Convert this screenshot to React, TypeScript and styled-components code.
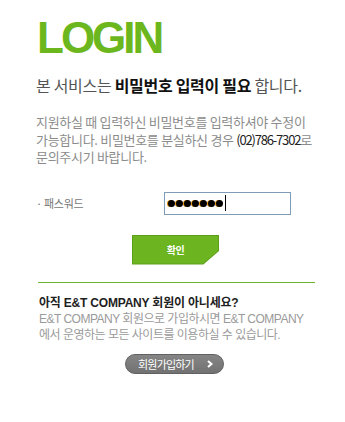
import * as React from 'react';
import styled, { createGlobalStyle } from 'styled-components';

const GlobalStyle = createGlobalStyle`
    html, body {
        margin: 0;
        padding: 0;
        background: #fff;
    }
    body {
        font-family: "Liberation Sans", "Noto Sans CJK KR", sans-serif;
    }
`;

const Page = styled.div`
    width: 345px;
    height: 422px;
    padding: 16px 30px 0 36px;
    box-sizing: border-box;
    display: flex;
    flex-direction: column;
`;

const Logo = styled.h1`
    margin: 0 0 0 1px;
    font-family: "Liberation Sans", sans-serif;
    font-weight: 700;
    font-size: 44px;
    line-height: 44px;
    letter-spacing: -3px;
    color: #6cb61e;
`;

const Title = styled.p`
    margin: 15px 0 0;
    font-family: "Noto Sans CJK KR", sans-serif;
    font-size: 16px;
    line-height: 20px;
    letter-spacing: -0.3px;
    color: #555;

    strong {
        color: #111;
        font-weight: 700;
    }
`;

const Notice = styled.p`
    margin: 18px 0 0;
    font-family: "Noto Sans CJK KR", sans-serif;
    font-size: 13px;
    line-height: 17.5px;
    letter-spacing: -0.3px;
    color: #8c8c8c;
`;

const Phone = styled.span`
    color: #222;
    letter-spacing: -1.2px;
`;

const FormRow = styled.div`
    margin-top: 26px;
    display: flex;
    align-items: center;
`;

const Label = styled.label`
    width: 128px;
    font-family: "Noto Sans CJK KR", sans-serif;
    font-size: 11px;
    letter-spacing: -0.3px;
    color: #777;
`;

const PasswordBox = styled.div`
    width: 127px;
    height: 23px;
    box-sizing: border-box;
    border: 1px solid #7f9db9;
    display: flex;
    align-items: center;
    padding-left: 3px;
    gap: 1px;
`;

const Dot = styled.span`
    width: 7px;
    height: 7px;
    border-radius: 50%;
    background: #000;
    box-shadow: -1px 0 0 #d98a00;
`;

const Caret = styled.span`
    width: 1px;
    height: 16px;
    background: #000;
    margin-left: 1px;
`;

const ConfirmButton = styled.button`
    margin: 20px 0 0 96px;
    width: 87px;
    height: 30px;
    border: none;
    padding: 0;
    background: #5c9f18;
    clip-path: polygon(0 0, 100% 0, 100% 55%, 82% 100%, 0 100%);
    display: flex;
    cursor: pointer;

    span {
        flex: 1;
        margin: 1px;
        background: #6cb520;
        clip-path: polygon(0 0, 100% 0, 100% 55%, 82% 100%, 0 100%);
        color: #fff;
        font-family: "Noto Sans CJK KR", sans-serif;
        font-weight: 700;
        font-size: 10px;
        display: flex;
        align-items: center;
        justify-content: center;
        letter-spacing: -0.5px;
    }
`;

const Divider = styled.div`
    margin: 17px 0 0 2px;
    width: 277px;
    height: 1px;
    flex: none;
    background: #6db52e;
`;

const AskTitle = styled.p`
    margin: 12px 0 0 3px;
    font-family: "Liberation Sans", "Noto Sans CJK KR", sans-serif;
    font-weight: 700;
    font-size: 12px;
    line-height: 16px;
    letter-spacing: -0.2px;
    color: #1e1e1e;
`;

const AskText = styled.p`
    margin: 0 0 0 3px;
    font-family: "Liberation Sans", "Noto Sans CJK KR", sans-serif;
    font-size: 12px;
    line-height: 16px;
    letter-spacing: -0.5px;
    color: #9a9a9a;
`;

const JoinButton = styled.button`
    margin: 11px 0 0 89px;
    width: 99px;
    height: 20px;
    border-radius: 10px;
    border: 1px solid #616161;
    background: linear-gradient(#858585, #727272);
    color: #fff;
    font-family: "Noto Sans CJK KR", sans-serif;
    font-size: 11px;
    letter-spacing: -0.8px;
    display: flex;
    align-items: center;
    justify-content: space-between;
    padding: 0 10px 0 12px;
    box-sizing: border-box;
    cursor: pointer;
`;

const Chevron = styled.svg`
    width: 6px;
    height: 8px;
`;

const App: React.FC = () => {
    return (
        <>
            <GlobalStyle />
            <Page>
                <Logo>LOGIN</Logo>
                <Title>
                    본 서비스는 <strong>비밀번호 입력이 필요</strong> 합니다.
                </Title>
                <Notice>
                    지원하실 때 입력하신 비밀번호를 입력하셔야 수정이
                    <br />
                    가능합니다. 비밀번호를 분실하신 경우 <Phone>(02)786-7302</Phone>로
                    <br />
                    문의주시기 바랍니다.
                </Notice>
                <FormRow>
                    <Label>· 패스워드</Label>
                    <PasswordBox>
                        {Array.from({ length: 7 }).map((_, i) => (
                            <Dot key={i} />
                        ))}
                        <Caret />
                    </PasswordBox>
                </FormRow>
                <ConfirmButton>
                    <span>확인</span>
                </ConfirmButton>
                <Divider />
                <AskTitle>아직 E&amp;T COMPANY 회원이 아니세요?</AskTitle>
                <AskText>
                    E&amp;T COMPANY 회원으로 가입하시면 E&amp;T COMPANY
                    <br />
                    에서 운영하는 모든 사이트를 이용하실 수 있습니다.
                </AskText>
                <JoinButton>
                    회원가입하기
                    <Chevron viewBox="0 0 6 8">
                        <path d="M1 1 L4.5 4 L1 7" stroke="#fff" strokeWidth="2" fill="none" />
                    </Chevron>
                </JoinButton>
            </Page>
        </>
    );
};

export default App;
